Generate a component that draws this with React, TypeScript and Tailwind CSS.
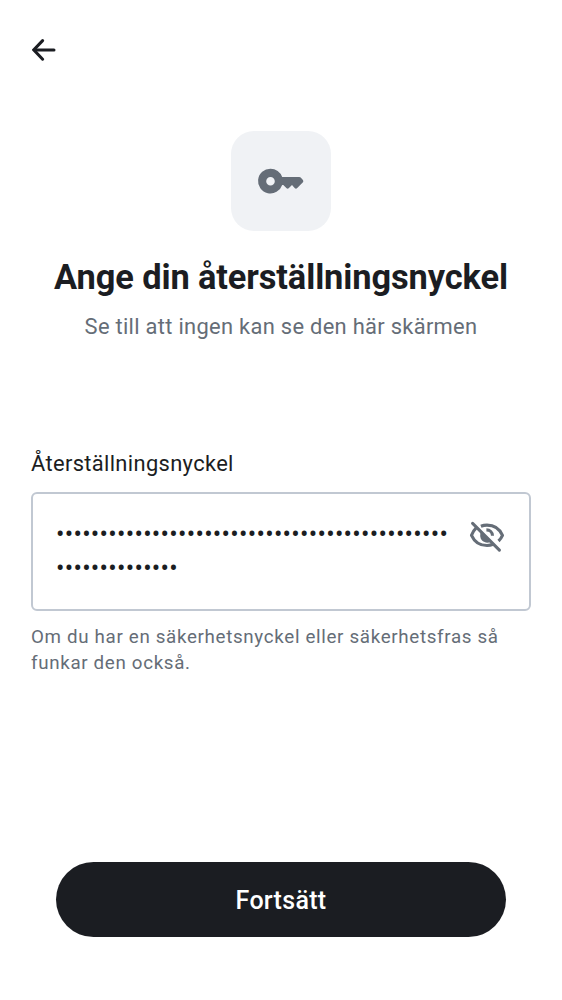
const ROBOTO = "font-['Roboto','Liberation_Sans',sans-serif]";

function BackIcon() {
  return (
    <svg width="24" height="24" viewBox="0 0 24 24" fill="none" stroke="#1b1d22" strokeWidth="3" strokeLinecap="round" strokeLinejoin="miter">
      <path d="M10.6 2.6 1.7 11.9 10.6 21.2" />
      <path d="M3 11.9H22" />
    </svg>
  );
}

function KeyIcon() {
  return (
    <svg width="50" height="50" viewBox="0 0 50 50" fill="#656d77">
      <path
        fillRule="evenodd"
        d="M14.5 12.7a12.4 12.4 0 0 1 11.7 8.3H43.2c.6 0 1.1.2 1.5.6l2 2.1c.8.8.8 2 0 2.8l-5.7 5.7c-.6.6-1.5.6-2.1 0l-2.9-3.1-3.3 3.1c-.7.6-1.5.6-2.1 0l-3.3-3.2h-1.1a12.4 12.4 0 1 1-11.7-16.3Zm0 8.2a4.3 4.3 0 1 0 0 8.6 4.3 4.3 0 0 0 0-8.6Z"
      />
    </svg>
  );
}

function HiddenIcon() {
  return (
    <svg width="38" height="38" viewBox="0 0 38 38" fill="none" stroke="#656d77" strokeWidth="3.1">
      <path d="M12.9 8.3C14.8 7.5 16.8 7.1 19 7.1c6.9 0 12.6 3.8 15.5 10.2-1 2.2-2.3 4.1-4 5.7" strokeLinejoin="round" />
      <path d="M8 10.1c-1.9 1.8-3.4 4.1-4.5 7.2C6.4 23.7 12.1 27.5 19 27.5c2.2 0 4.2-.4 6.1-1.2" strokeLinejoin="round" />
      <path d="M18.4 11.9c3.5 0 6.1 2.4 6.1 5.9" />
      <path d="M12.6 14.2 22.4 24c-4.6 2.2-10.2-.9-10.2-6.4 0-1.2.1-2.3.4-3.4Z" fill="#656d77" stroke="none" />
      <path d="M4.6 5.3 31.4 32.1" strokeLinecap="round" />
    </svg>
  );
}

export default function App() {
  return (
    <main className={`flex h-[1000px] w-[562px] flex-col bg-white text-[#1b1d22] ${ROBOTO}`}>
      <header className="flex h-[100px] shrink-0 items-center pl-[32px]">
        <button type="button" aria-label="Tillbaka">
          <BackIcon />
        </button>
      </header>

      <section className="flex flex-col items-center pt-[31px]">
        <div className="flex size-[100px] items-center justify-center rounded-[23px] bg-[#f0f2f5]">
          <KeyIcon />
        </div>
        <h1 className="mt-[24px] text-[34.4px] leading-[44px] font-bold tracking-[-0.11px] whitespace-nowrap">Ange din återställningsnyckel</h1>
        <p className="mt-[12px] text-[21.9px] leading-[32px] tracking-[0.3px] whitespace-nowrap text-[#656d77]">
          Se till att ingen kan se den här skärmen
        </p>
      </section>

      <section className="mt-[105px] px-[31px]">
        <label className="block text-[21.9px] leading-[32px] tracking-[0.34px]">Återställningsnyckel</label>
        <div className="mt-[12px] flex h-[119px] items-start justify-between rounded-[6px] border-2 border-[#c1c8d2] pt-[24px] pr-[23px] pl-[23px]">
          <div className="text-[25px] leading-[34px] tracking-[0.28px]">
            <div>{"•".repeat(45)}</div>
            <div>{"•".repeat(14)}</div>
          </div>
          <button type="button" aria-label="Visa">
            <HiddenIcon />
          </button>
        </div>
        <p className="mt-[13px] text-[18.75px] leading-[26px] tracking-[0.67px] text-[#656d77]">
          Om du har en säkerhetsnyckel eller säkerhetsfras så
          <br />
          funkar den också.
        </p>
      </section>

      <footer className="mt-auto px-[56px] pb-[63px]">
        <button type="button" className="flex h-[75px] w-full items-center justify-center rounded-full bg-[#1b1d22] pt-[2px] text-[25px] font-medium tracking-[0.3px] text-white">
          Fortsätt
        </button>
      </footer>
    </main>
  );
}
